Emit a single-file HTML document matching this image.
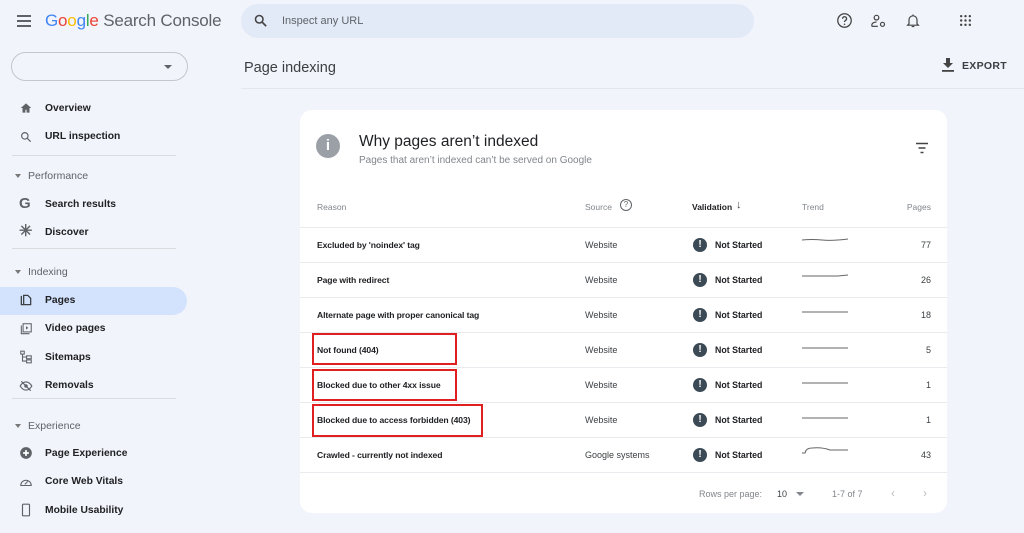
<!DOCTYPE html>
<html><head><style>
*{box-sizing:border-box;margin:0;padding:0}
body{width:1024px;height:533px;background:#f1f4fa;font-family:"Liberation Sans",sans-serif;position:relative;overflow:hidden;color:#202124}
.a{position:absolute}
.nav{position:absolute;left:45px;font-size:10.3px;color:#202124;font-weight:bold;letter-spacing:0}
.ico{position:absolute;left:19px;width:14px;height:14px}
.sec{position:absolute;left:28px;font-size:10.5px;color:#5f6368}
.tri{position:absolute;left:15px;width:0;height:0;border-left:3px solid transparent;border-right:3px solid transparent;border-top:4px solid #777}
.div{position:absolute;left:12px;width:164px;height:1px;background:#dadce0}
.card{position:absolute;left:300px;top:110px;width:647px;height:403px;background:#fff;border-radius:12px}
.row{position:absolute;left:0;width:647px;height:35px;border-top:1px solid #e8eaed;font-size:9px}
.row span{position:absolute;top:12px}
.r{left:17px;font-weight:bold;color:#202124;font-size:8.6px;letter-spacing:-0.1px}
.s{left:285px;color:#3c4043}
.v{left:415px;font-weight:bold;color:#202124;font-size:8.8px}
.p{right:16px;color:#3c4043}
.ex{position:absolute;left:393px;top:10px;width:14px;height:14px;border-radius:50%;background:#3c4a56;color:#fff;font-size:10px;font-weight:bold;text-align:center;line-height:14px}
.tr{position:absolute;left:502px;top:8px}
.box{position:absolute;border:2px solid #e02020}
</style></head><body>
<div class="a" style="left:17px;top:15px;width:14px;height:2px;background:#5f6368;box-shadow:0 5px 0 #5f6368,0 10px 0 #5f6368"></div>
<div class="a" style="left:45px;top:11px;font-size:17px;letter-spacing:-0.2px"><span style="color:#4285f4">G</span><span style="color:#ea4335">o</span><span style="color:#fbbc05">o</span><span style="color:#4285f4">g</span><span style="color:#34a853">l</span><span style="color:#ea4335">e</span> <span style="color:#5f6368">Search Console</span></div>
<div class="a" style="left:241px;top:4px;width:513px;height:34px;border-radius:17px;background:#e3eaf7"></div>
<svg class="a" style="left:253px;top:13px" width="15" height="15" viewBox="0 0 24 24"><circle cx="10" cy="10" r="6" fill="none" stroke="#444" stroke-width="2.5"/><path d="M14.5 14.5 L21 21" stroke="#444" stroke-width="2.8"/></svg>
<div class="a" style="left:282px;top:15px;font-size:11px;color:#5f6368">Inspect any URL</div>
<svg class="a" style="left:836px;top:12px" width="17" height="17" viewBox="0 0 24 24"><circle cx="12" cy="12" r="9.5" fill="none" stroke="#444" stroke-width="1.8"/><path d="M9.3 9.5a2.8 2.8 0 1 1 4 2.5c-1 .5-1.3 1.2-1.3 2.2" fill="none" stroke="#444" stroke-width="1.8"/><circle cx="12" cy="17.3" r="1.1" fill="#444"/></svg>
<svg class="a" style="left:870px;top:13px" width="17" height="16" viewBox="0 0 24 24"><circle cx="9" cy="7" r="3.5" fill="none" stroke="#444" stroke-width="1.8"/><path d="M2 20v-2c0-3 4-4.5 7-4.5" fill="none" stroke="#444" stroke-width="1.8"/><path d="M2 20h9" stroke="#444" stroke-width="1.8"/><circle cx="18" cy="17" r="3" fill="none" stroke="#444" stroke-width="1.8"/></svg>
<svg class="a" style="left:905px;top:12px" width="16" height="17" viewBox="0 0 24 24"><path d="M6 17V11a6 6 0 0 1 12 0v6l2 2H4z" fill="none" stroke="#444" stroke-width="1.8"/><path d="M10 21h4M12 3v2" stroke="#444" stroke-width="1.8"/></svg>
<svg class="a" style="left:959px;top:14px" width="13" height="13" viewBox="0 0 12 12" fill="#444"><circle cx="2" cy="2" r="1.1"/><circle cx="6" cy="2" r="1.1"/><circle cx="10" cy="2" r="1.1"/><circle cx="2" cy="6" r="1.1"/><circle cx="6" cy="6" r="1.1"/><circle cx="10" cy="6" r="1.1"/><circle cx="2" cy="10" r="1.1"/><circle cx="6" cy="10" r="1.1"/><circle cx="10" cy="10" r="1.1"/></svg>
<div class="a" style="left:11px;top:52px;width:177px;height:29px;border:1px solid #c4c7cc;border-radius:15px"></div>
<div class="a" style="left:164px;top:65px;border-left:4px solid transparent;border-right:4px solid transparent;border-top:4px solid #5f6368"></div>
<svg class="ico" style="top:101px" viewBox="0 0 24 24"><path d="M12 4 3 12h3v8h5v-5h2v5h5v-8h3z" fill="#5f6368"/></svg>
<div class="nav" style="top:103px">Overview</div>
<svg class="ico" style="top:130px" viewBox="0 0 24 24"><circle cx="10" cy="10" r="5.5" fill="none" stroke="#5f6368" stroke-width="2"/><path d="M14 14l6 6" stroke="#5f6368" stroke-width="2"/></svg>
<div class="nav" style="top:131px">URL inspection</div>
<div class="div" style="top:155px"></div>
<div class="tri" style="top:174px"></div><div class="sec" style="top:170px">Performance</div>
<div class="a" style="left:19px;top:195px;font-size:15px;font-weight:bold;color:#5f6368">G</div>
<div class="nav" style="top:199px">Search results</div>
<div class="a" style="left:19px;top:224px;font-size:16px;color:#5f6368;line-height:16px;font-weight:bold">✳</div>
<div class="nav" style="top:227px">Discover</div>
<div class="div" style="top:248px"></div>
<div class="tri" style="top:270px"></div><div class="sec" style="top:266px">Indexing</div>
<div class="a" style="left:0;top:287px;width:187px;height:28px;background:#d3e3fd;border-radius:0 14px 14px 0"></div>
<svg class="ico" style="top:293px" viewBox="0 0 24 24"><path d="M4 5v15h3M8 4h7l5 5v11H8z" fill="none" stroke="#3c4043" stroke-width="2.2"/></svg>
<div class="nav" style="top:295px">Pages</div>
<svg class="ico" style="top:322px" viewBox="0 0 24 24"><path d="M4 6v14h14" fill="none" stroke="#5f6368" stroke-width="1.8"/><rect x="7" y="3" width="14" height="14" fill="none" stroke="#5f6368" stroke-width="1.8"/><path d="M12 7v6l4-3z" fill="#5f6368"/></svg>
<div class="nav" style="top:323px">Video pages</div>
<svg class="ico" style="top:350px" viewBox="0 0 24 24"><rect x="3" y="2" width="6" height="5" fill="none" stroke="#5f6368" stroke-width="1.8"/><rect x="13" y="10" width="8" height="5" fill="none" stroke="#5f6368" stroke-width="1.8"/><rect x="13" y="17" width="8" height="5" fill="none" stroke="#5f6368" stroke-width="1.8"/><path d="M6 7v12h7M6 12h7" fill="none" stroke="#5f6368" stroke-width="1.8"/></svg>
<div class="nav" style="top:352px">Sitemaps</div>
<svg class="ico" style="top:379px" viewBox="0 0 24 24"><path d="M2 12c3-5 7-7 10-7s7 2 10 7c-3 5-7 7-10 7s-7-2-10-7z" fill="none" stroke="#5f6368" stroke-width="2"/><circle cx="12" cy="12" r="3" fill="#5f6368"/><path d="M4 4l16 16" stroke="#5f6368" stroke-width="2"/></svg>
<div class="nav" style="top:380px">Removals</div>
<div class="div" style="top:398px"></div>
<div class="tri" style="top:424px"></div><div class="sec" style="top:420px">Experience</div>
<svg class="ico" style="top:446px" viewBox="0 0 24 24"><circle cx="12" cy="12" r="10" fill="#5f6368"/><path d="M12 7v10M7 12h10" stroke="#fff" stroke-width="3"/></svg>
<div class="nav" style="top:448px">Page Experience</div>
<svg class="ico" style="top:475px" viewBox="0 0 24 24"><path d="M3 18a9 9 0 1 1 18 0z" fill="none" stroke="#5f6368" stroke-width="1.8"/><path d="M10 16l5-5" stroke="#5f6368" stroke-width="1.8"/></svg>
<div class="nav" style="top:476px">Core Web Vitals</div>
<svg class="ico" style="top:503px" viewBox="0 0 24 24"><rect x="6" y="2" width="12" height="20" rx="1.5" fill="none" stroke="#5f6368" stroke-width="2"/></svg>
<div class="nav" style="top:505px">Mobile Usability</div>
<div class="a" style="left:244px;top:60px;font-size:14.5px;color:#3c4043">Page indexing</div>
<div class="a" style="left:241px;top:88px;width:783px;height:1px;background:#e3e6ea"></div>
<svg class="a" style="left:941px;top:58px" width="14" height="15" viewBox="0 0 14 15"><path d="M5 0h4v5h3L7 10 2 5h3z" fill="#444"/><rect x="1" y="12" width="12" height="1.8" fill="#444"/></svg>
<div class="a" style="left:962px;top:60px;font-size:10.5px;font-weight:bold;color:#3c4043;letter-spacing:0.3px">EXPORT</div>
<div class="card">
 <div class="a" style="left:16px;top:24px;width:24px;height:24px;border-radius:50%;background:#9aa0a6;color:#fff;font-weight:bold;font-size:15px;text-align:center;line-height:24px">i</div>
 <div class="a" style="left:59px;top:23px;font-size:15.5px;color:#202124">Why pages aren’t indexed</div>
 <div class="a" style="left:59px;top:45px;font-size:10px;color:#80868b">Pages that aren’t indexed can’t be served on Google</div>
 <svg class="a" style="left:615px;top:32px" width="14" height="12" viewBox="0 0 14 12"><path d="M1 1.5h12M3.5 6h7M5.5 10.5h3" stroke="#444" stroke-width="1.6"/></svg>
 <div class="a" style="left:17px;top:92px;font-size:8.5px;color:#80868b">Reason</div>
 <div class="a" style="left:285px;top:92px;font-size:8.5px;color:#80868b">Source</div>
 <div class="a" style="left:320px;top:89px;width:12px;height:12px;border:1px solid #5f6368;border-radius:50%;font-size:8px;text-align:center;line-height:10px;color:#5f6368">?</div>
 <div class="a" style="left:392px;top:92px;font-size:8.5px;color:#202124;font-weight:bold">Validation</div>
 <div class="a" style="left:436px;top:89px;font-size:11px;color:#444">↓</div>
 <div class="a" style="left:502px;top:92px;font-size:8.5px;color:#80868b">Trend</div>
 <div class="a" style="right:16px;top:92px;font-size:8.5px;color:#80868b">Pages</div>
 <div class="row" style="top:117px"><span class="r">Excluded by 'noindex' tag</span><span class="s">Website</span><div class="ex">!</div><span class="v">Not Started</span><svg class="tr" width="48" height="8"><path d="M0 4 Q10 3 20 4 T46 3" stroke="#666" fill="none"/></svg><span class="p">77</span></div>
 <div class="row" style="top:152px"><span class="r">Page with redirect</span><span class="s">Website</span><div class="ex">!</div><span class="v">Not Started</span><svg class="tr" width="48" height="8"><path d="M0 5 H36 L46 4" stroke="#666" fill="none"/></svg><span class="p">26</span></div>
 <div class="row" style="top:187px"><span class="r">Alternate page with proper canonical tag</span><span class="s">Website</span><div class="ex">!</div><span class="v">Not Started</span><svg class="tr" width="48" height="8"><path d="M0 6 H46" stroke="#666" fill="none"/></svg><span class="p">18</span></div>
 <div class="row" style="top:222px"><span class="r">Not found (404)</span><span class="s">Website</span><div class="ex">!</div><span class="v">Not Started</span><svg class="tr" width="48" height="10"><path d="M0 7 H46" stroke="#666" fill="none"/></svg><span class="p">5</span></div>
 <div class="row" style="top:257px"><span class="r">Blocked due to other 4xx issue</span><span class="s">Website</span><div class="ex">!</div><span class="v">Not Started</span><svg class="tr" width="48" height="10"><path d="M0 7 H46" stroke="#666" fill="none"/></svg><span class="p">1</span></div>
 <div class="row" style="top:292px"><span class="r">Blocked due to access forbidden (403)</span><span class="s">Website</span><div class="ex">!</div><span class="v">Not Started</span><svg class="tr" width="48" height="10"><path d="M0 7 H46" stroke="#666" fill="none"/></svg><span class="p">1</span></div>
 <div class="row" style="top:327px"><span class="r">Crawled - currently not indexed</span><span class="s">Google systems</span><div class="ex">!</div><span class="v">Not Started</span><svg class="tr" width="48" height="10"><path d="M0 7 L3 7 Q4 2 10 2 Q20 1 28 4 H46" stroke="#666" fill="none"/></svg><span class="p">43</span></div>
 <div class="a" style="left:0;top:362px;width:647px;height:1px;background:#e8eaed"></div>
 <div class="a" style="left:399px;top:379px;font-size:9px;color:#80868b">Rows per page:</div>
 <div class="a" style="left:477px;top:379px;font-size:9px;color:#3c4043">10</div>
 <div class="a" style="left:496px;top:382px;border-left:4px solid transparent;border-right:4px solid transparent;border-top:4px solid #80868b"></div>
 <div class="a" style="left:532px;top:379px;font-size:9px;color:#80868b">1-7 of 7</div>
 <div class="a" style="left:591px;top:376px;font-size:12px;color:#bbb">‹</div>
 <div class="a" style="left:623px;top:376px;font-size:12px;color:#bbb">›</div>
</div>
<div class="box" style="left:312px;top:333px;width:145px;height:32px"></div>
<div class="box" style="left:312px;top:369px;width:145px;height:32px"></div>
<div class="box" style="left:312px;top:404px;width:171px;height:33px"></div>
</body></html>
